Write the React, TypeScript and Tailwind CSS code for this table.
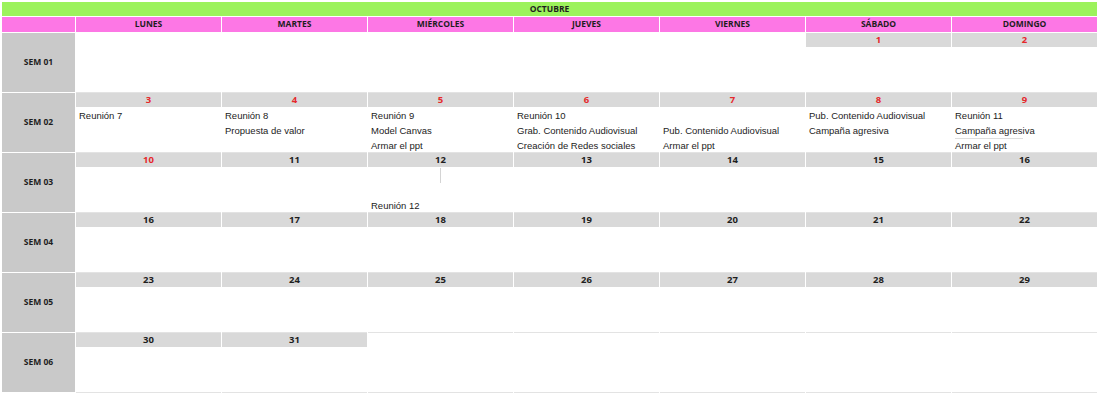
import React from 'react';

type Day = { n: number; red?: boolean; lines?: string[] } | null;

interface Week {
  label: string;
  days: Day[];
}

const DAY_NAMES = ['LUNES', 'MARTES', 'MIÉRCOLES', 'JUEVES', 'VIERNES', 'SÁBADO', 'DOMINGO'];

const weeks: Week[] = [
  {
    label: 'SEM 01',
    days: [null, null, null, null, null, { n: 1, red: true }, { n: 2, red: true }],
  },
  {
    label: 'SEM 02',
    days: [
      { n: 3, red: true, lines: ['Reunión 7'] },
      { n: 4, red: true, lines: ['Reunión 8', 'Propuesta de valor'] },
      { n: 5, red: true, lines: ['Reunión 9', 'Model Canvas', 'Armar el ppt'] },
      { n: 6, red: true, lines: ['Reunión 10', 'Grab. Contenido Audiovisual', 'Creación de Redes sociales'] },
      { n: 7, red: true, lines: ['', 'Pub. Contenido Audiovisual', 'Armar el ppt'] },
      { n: 8, red: true, lines: ['Pub. Contenido Audiovisual', 'Campaña agresiva'] },
      { n: 9, red: true, lines: ['Reunión 11', 'Campaña agresiva', 'Armar el ppt'] },
    ],
  },
  {
    label: 'SEM 03',
    days: [
      { n: 10, red: true },
      { n: 11 },
      { n: 12, lines: ['', '', 'Reunión 12'] },
      { n: 13 },
      { n: 14 },
      { n: 15 },
      { n: 16 },
    ],
  },
  {
    label: 'SEM 04',
    days: [{ n: 16 }, { n: 17 }, { n: 18 }, { n: 19 }, { n: 20 }, { n: 21 }, { n: 22 }],
  },
  {
    label: 'SEM 05',
    days: [{ n: 23 }, { n: 24 }, { n: 25 }, { n: 26 }, { n: 27 }, { n: 28 }, { n: 29 }],
  },
  {
    label: 'SEM 06',
    days: [{ n: 30 }, { n: 31 }, null, null, null, null, null],
  },
];

function DayCell({ day, week, col }: { day: Day; week: number; col: number }) {
  const lines = day?.lines ?? [];
  return (
    <div className="h-[60px] flex flex-col border-b border-[#e3e3e3] bg-white overflow-hidden">
      {day ? (
        <div
          className={`h-[14px] shrink-0 bg-[#d9d9d9] flex items-center justify-center font-['Open_Sans',sans-serif] text-[9.5px] font-bold leading-none ${
            day.red ? 'text-[#e5282b]' : 'text-[#1e1e1e]'
          }`}
        >
          {day.n}
        </div>
      ) : (
        <div className="h-[14px] shrink-0" />
      )}
      <div className="pt-px flex flex-col font-['Liberation_Sans',Arial,sans-serif] text-[9.5px] text-[#1c1c1c]">
        {[0, 1, 2].map((i) => {
          // stray gridline mark left in the sheet
          if (week === 2 && col === 2 && i === 0) {
            return (
              <div key={i} className="h-[15px] flex justify-center">
                <div className="w-px h-[15px] bg-[#d4d4d4]" />
              </div>
            );
          }
          const underline = week === 1 && col === 6 && i === 1;
          return (
            <div key={i} className="h-[15px] leading-[15px] pl-[3px] whitespace-nowrap">
              <span className={underline ? 'inline-block w-[68px] border-b border-[#dedede] leading-[14px]' : ''}>
                {lines[i] ?? ''}
              </span>
            </div>
          );
        })}
      </div>
    </div>
  );
}

export default function App() {
  return (
    <div className="w-[1100px] h-[393px] bg-white pl-[2px] pt-[2px] overflow-hidden">
      {/* Month bar */}
      <div className="w-[1095px] h-[14px] bg-[#9cf25c] flex items-center justify-center font-['Open_Sans',sans-serif] text-[8.5px] font-bold text-[#1e1e1e] leading-none">
        OCTUBRE
      </div>

      {/* Day names */}
      <div className="mt-px grid grid-cols-[73px_repeat(7,145px)] gap-x-px h-[15px]">
        <div className="bg-[#fd77e5]" />
        {DAY_NAMES.map((d) => (
          <div
            key={d}
            className="bg-[#fd77e5] flex items-center justify-center font-['Open_Sans',sans-serif] text-[8.5px] font-bold text-[#1e1e1e] leading-none"
          >
            {d}
          </div>
        ))}
      </div>

      {/* Weeks */}
      <div className="mt-px flex flex-col">
        {weeks.map((w, wi) => (
          <div key={w.label} className="grid grid-cols-[73px_repeat(7,145px)] gap-x-px h-[60px]">
            <div className="h-[59px] bg-[#c9c9c9] flex items-center justify-center font-['Open_Sans',sans-serif] text-[8.5px] font-bold text-[#1e1e1e]">
              {w.label}
            </div>
            {w.days.map((d, di) => (
              <DayCell key={di} day={d} week={wi} col={di} />
            ))}
          </div>
        ))}
      </div>
    </div>
  );
}
